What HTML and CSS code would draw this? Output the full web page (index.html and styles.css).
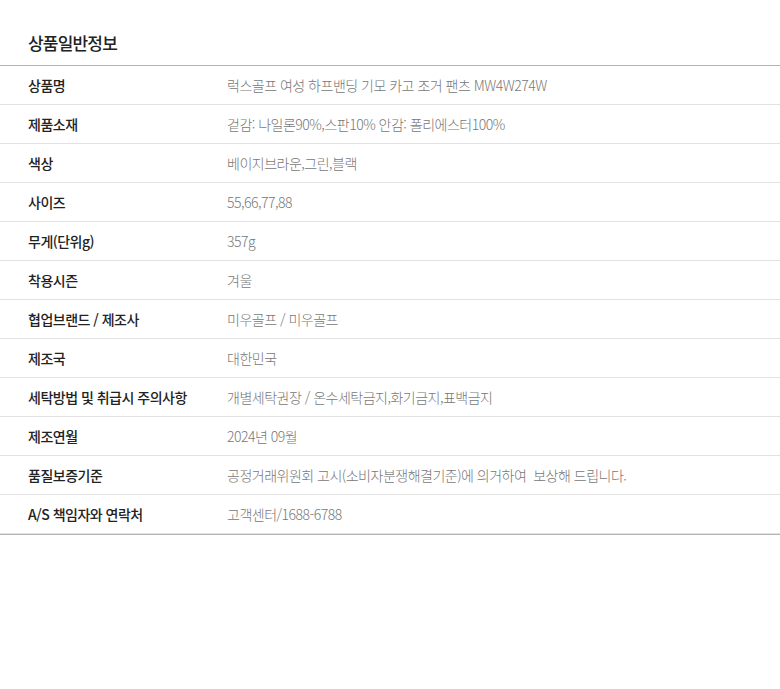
FILE: index.html
```html
<!DOCTYPE html>
<html lang="ko">
<head>
    <meta charset="UTF-8">
    <meta name="viewport" content="width=device-width, initial-scale=1.0">
    <title>상품일반정보</title>
    <link rel="stylesheet" href="styles.css">
</head>
<body>

    <div class="info-section">
        <h3 class="info-title">상품일반정보</h3>

        <div class="info-table-wrap">
            <table class="info-table">
                <tr><th>상품명</th><td>럭스골프 여성 하프밴딩 기모 카고 조거 팬츠 MW4W274W</td></tr>
                <tr><th>제품소재</th><td>겉감: 나일론90%,스판10% 안감: 폴리에스터100%</td></tr>
                <tr><th>색상</th><td>베이지브라운,그린,블랙</td></tr>
                <tr><th>사이즈</th><td>55,66,77,88</td></tr>
                <tr><th>무게(단위g)</th><td>357g</td></tr>
                <tr><th>착용시즌</th><td>겨울</td></tr>
                <tr><th>협업브랜드 / 제조사</th><td>미우골프 / 미우골프</td></tr>
                <tr><th>제조국</th><td>대한민국</td></tr>
                <tr><th>세탁방법 및 취급시 주의사항</th><td>개별세탁권장 / 온수세탁금지,화기금지,표백금지</td></tr>
                <tr><th>제조연월</th><td>2024년 09월</td></tr>
                <tr><th>품질보증기준</th><td>공정거래위원회 고시(소비자분쟁해결기준)에 의거하여&nbsp; 보상해 드립니다.</td></tr>
                <tr><th>A/S 책임자와 연락처</th><td>고객센터/1688-6788</td></tr>
            </table>
        </div>
    </div>

</body>
</html>
```

FILE: styles.css
```css
body {
    margin: 0;
    padding: 0;
    font-family: "Noto Sans CJK KR", "Noto Sans", sans-serif;
    background-color: #fff;
}

.info-section {
    width: 780px;
}

.info-title {
    margin: 0;
    padding: 30px 28px 9px;
    font-size: 17px;
    line-height: 26px;
    font-weight: 500;
    letter-spacing: -0.8px;
    color: #222;
}

/* Table */
.info-table-wrap {
    border-top: 1px solid #b4b4b4;
    border-bottom: 1px solid #b4b4b4;
}

.info-table {
    width: 100%;
    border-collapse: collapse;
}

.info-table th,
.info-table td {
    height: 38px;
    padding: 0;
    font-size: 14px;
    letter-spacing: -0.5px;
    text-align: left;
    vertical-align: middle;
    border-bottom: 1px solid #e2e2e2;
}

.info-table th {
    width: 199px;
    padding-left: 28px;
    font-weight: 500;
    color: #222;
}

.info-table td {
    color: #777;
    font-weight: 300;
}
```
